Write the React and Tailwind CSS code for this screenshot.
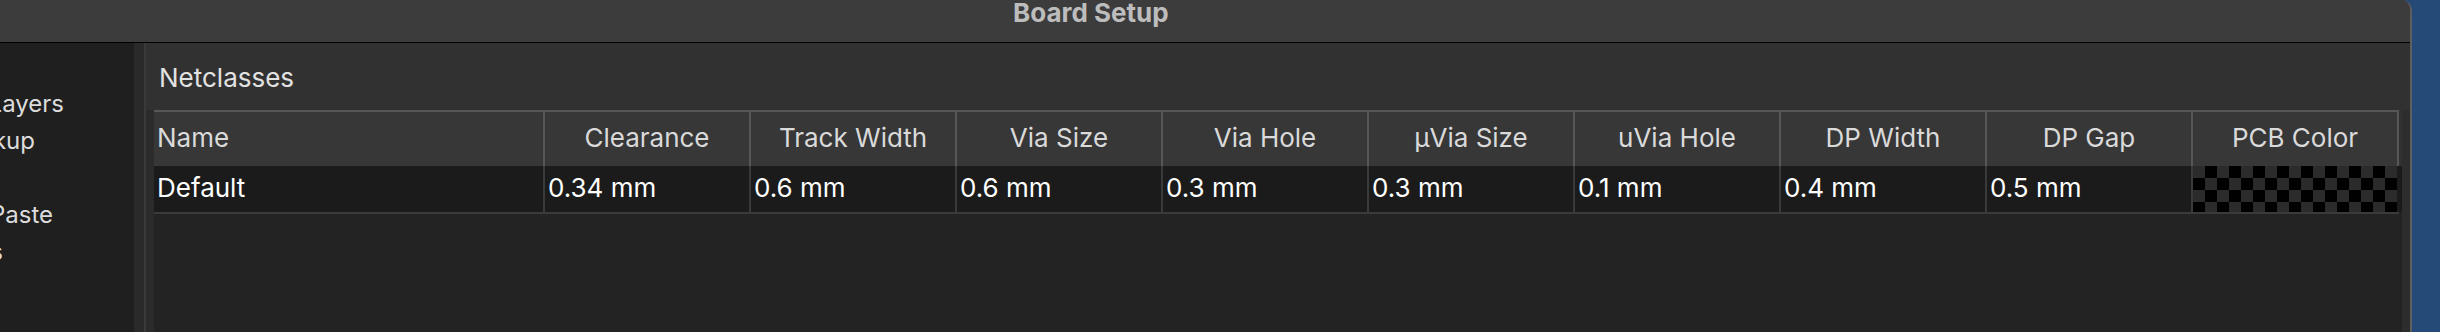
const cols = [
  { name: "Name", value: "Default", w: "w-[389px]", first: true },
  { name: "Clearance", value: "0.34 mm" },
  { name: "Track Width", value: "0.6 mm" },
  { name: "Via Size", value: "0.6 mm" },
  { name: "Via Hole", value: "0.3 mm" },
  { name: "µVia Size", value: "0.3 mm" },
  { name: "uVia Hole", value: "0.1 mm" },
  { name: "DP Width", value: "0.4 mm" },
  { name: "DP Gap", value: "0.5 mm" },
  { name: "PCB Color", value: null },
];

const sideItems = [
  { text: "Board Editor Layers", w: "w-[64px]" },
  { text: "Physical Stackup", w: "w-[35px]" },
  { text: "Board Finish", w: "w-0" },
  { text: "Solder Mask/Paste", w: "w-[53px]" },
  { text: "Text & Graphics", w: "w-[3px]" },
];

export default function App() {
  return (
    <div className="w-[2440px] h-[332px] flex overflow-hidden bg-[#254872] font-['Inter','Liberation_Sans',sans-serif]">
      <div className="w-[2412px] h-full shrink-0 flex flex-col bg-[#313131] border-r-2 border-[#5f5f5f] rounded-tr-[10px] overflow-hidden">
        <div className="h-[43px] shrink-0 bg-[#3c3c3c] border-b border-black pl-[1013px] text-[26px] leading-[26px] font-bold text-[#bdbdbd] whitespace-nowrap">
          Board Setup
        </div>
        <div className="flex flex-1 min-h-0">
          <div className="w-[134px] shrink-0 bg-[#1f1f1f] pt-[42px] text-[24px] leading-[37px] text-[#dcdcdc]">
            {sideItems.map((it) => (
              <div key={it.text} className={`${it.w} h-[37px] flex justify-end overflow-hidden whitespace-nowrap`}>
                <span>{it.text}</span>
              </div>
            ))}
          </div>
          <div className="w-[10px] shrink-0 bg-[#2a2a2a]" />
          <div className="w-[2px] shrink-0 bg-[#3a3a3a]" />
          <div className="flex-1 min-w-0 flex flex-col">
            <div className="h-[67px] shrink-0 pt-[19px] pl-[13px] text-[26px] leading-[32px] text-[#e2e2e2]">
              Netclasses
            </div>
            <div className="flex flex-1 min-h-0 bg-[#2b2b2b]">
              <div className="w-[8px] shrink-0" />
              <div className="w-[2248px] shrink-0 bg-[#232323] flex flex-col">
                <div className="flex bg-[#313131]">
                  <div className="flex bg-[#373737] border-t-2 border-r-2 border-[#575757] h-[56px]">
                    {cols.map((c) => (
                      <div
                        key={c.name}
                        className={
                          c.first
                            ? "w-[389px] h-full flex items-center px-[3px] pb-[3px] text-[26px] text-[#dadada]"
                            : "w-[206px] h-full flex items-center justify-center border-l-2 border-[#575757] pb-[3px] text-[26px] text-[#dadada]"
                        }
                      >
                        {c.name}
                      </div>
                    ))}
                  </div>
                </div>
                <div className="flex bg-[#1b1b1b] h-[46px] w-[2248px]">
                  {cols.map((c) =>
                    c.first ? (
                      <div key={c.name} className="w-[389px] h-full flex items-center px-[3px] pb-[3px] text-[26px] text-white">
                        {c.value}
                      </div>
                    ) : c.value ? (
                      <div key={c.name} className="w-[206px] h-full flex items-center border-l-2 border-[#3a3a3a] pl-[3px] pb-[3px] text-[26px] text-white">
                        {c.value}
                      </div>
                    ) : (
                      <div key={c.name} className="w-[206px] h-full border-l-2 border-[#3a3a3a] flex">
                        <div className="w-[204px] h-full bg-[conic-gradient(#000_25%,#2b2b2b_0_50%,#000_0_75%,#2b2b2b_0)] bg-size-[24px_24px]" />
                      </div>
                    )
                  )}
                </div>
                <div className="w-[2245px] h-[2px] bg-[#3a3a3a]" />
              </div>
              <div className="flex-1 bg-[#2d2d2d]" />
            </div>
          </div>
        </div>
      </div>
      <div className="flex-1 bg-[#264a77]" />
    </div>
  );
}
